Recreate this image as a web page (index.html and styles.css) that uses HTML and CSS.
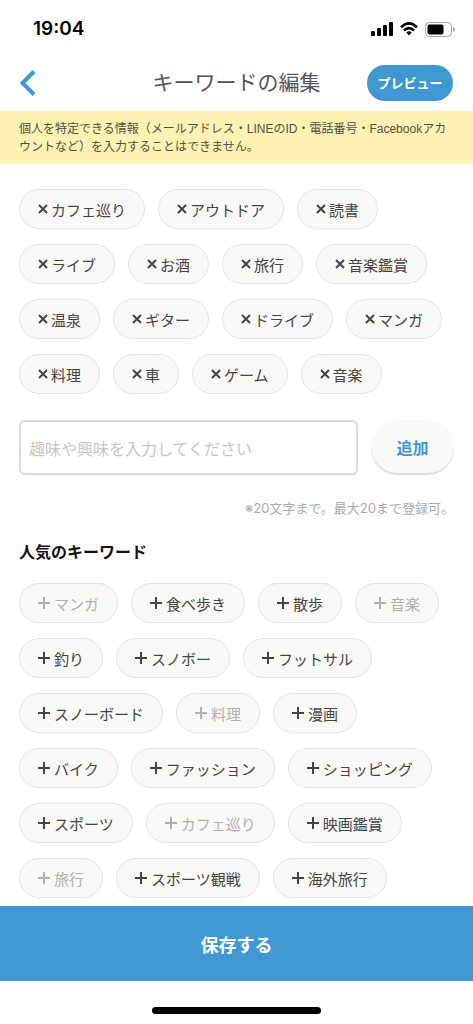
FILE: index.html
```html
<!DOCTYPE html>
<html lang="ja">
<head>
<meta charset="utf-8">
<meta name="viewport" content="width=device-width, initial-scale=1">
<title>キーワードの編集</title>
<link rel="stylesheet" href="styles.css">
</head>
<body>
<svg class="symbols" aria-hidden="true">
  <symbol id="remove" viewBox="0 0 10 10"><path d="M1 1L9 9M9 1L1 9"/></symbol>
  <symbol id="plus" viewBox="0 0 12 12"><path d="M0 6H12M6 0V12"/></symbol>
</svg>
<div class="screen">
  <div class="status">
    <span class="time">19:04</span>
    <div class="status-icons">
      <svg width="22" height="14" viewBox="0 0 22 14" aria-hidden="true"><rect x="0" y="9" width="4" height="5" rx="1"/><rect x="6" y="6" width="4" height="8" rx="1"/><rect x="12" y="3" width="4" height="11" rx="1"/><rect x="18" y="0" width="4" height="14" rx="1"/></svg>
      <svg width="18" height="14" viewBox="0 0 18 14" aria-hidden="true"><g fill="none" stroke="#000" stroke-width="2.6"><path d="M1 5.2Q9-2.4 17 5.2"/><path d="M4 8.5Q9 3.9 14 8.5"/></g><path d="M6.2 10.4Q9 8.2 11.8 10.4L9 13.4Z"/></svg>
      <svg width="30" height="15" viewBox="0 0 30 15" aria-hidden="true"><rect x=".5" y=".5" width="26" height="14" rx="4" fill="#fff" stroke="#a3a3a3"/><rect x="2.5" y="2.5" width="16" height="10" rx="2"/><path d="M28 5Q30 5.700 30 7.500T28 10Z" fill="#a3a3a3"/></svg>
    </div>
  </div>
  <header class="header">
    <button class="back" type="button" aria-label="戻る"><svg width="16" height="26" viewBox="0 0 16 26" aria-hidden="true"><path d="M14 1.500L2.500 13L14 24.500"/></svg></button>
    <h1 class="title">キーワードの編集</h1>
    <button class="preview" type="button">プレビュー</button>
  </header>
  <p class="notice">個人を特定できる情報（メールアドレス・LINEのID・電話番号・Facebookアカ<br>ウントなど）を入力することはできません。</p>
  <main class="content">
    <div class="chips">
      <button class="chip remove" type="button"><svg><use href="#remove"/></svg>カフェ巡り</button>
      <button class="chip remove" type="button"><svg><use href="#remove"/></svg>アウトドア</button>
      <button class="chip remove" type="button"><svg><use href="#remove"/></svg>読書</button>
      <button class="chip remove" type="button"><svg><use href="#remove"/></svg>ライブ</button>
      <button class="chip remove" type="button"><svg><use href="#remove"/></svg>お酒</button>
      <button class="chip remove" type="button"><svg><use href="#remove"/></svg>旅行</button>
      <button class="chip remove" type="button"><svg><use href="#remove"/></svg>音楽鑑賞</button>
      <button class="chip remove" type="button"><svg><use href="#remove"/></svg>温泉</button>
      <button class="chip remove" type="button"><svg><use href="#remove"/></svg>ギター</button>
      <button class="chip remove" type="button"><svg><use href="#remove"/></svg>ドライブ</button>
      <button class="chip remove" type="button"><svg><use href="#remove"/></svg>マンガ</button>
      <button class="chip remove" type="button"><svg><use href="#remove"/></svg>料理</button>
      <button class="chip remove" type="button"><svg><use href="#remove"/></svg>車</button>
      <button class="chip remove" type="button"><svg><use href="#remove"/></svg>ゲーム</button>
      <button class="chip remove" type="button"><svg><use href="#remove"/></svg>音楽</button>
    </div>
    <form class="entry">
      <input class="field" type="text" maxlength="20" aria-label="キーワード" placeholder="趣味や興味を入力してください">
      <button class="add" type="button">追加</button>
    </form>
    <p class="hint">※20文字まで。最大20まで登録可。</p>
    <h2 class="heading">人気のキーワード</h2>
    <div class="chips">
      <button class="chip plus" type="button" disabled><svg><use href="#plus"/></svg>マンガ</button>
      <button class="chip plus" type="button"><svg><use href="#plus"/></svg>食べ歩き</button>
      <button class="chip plus" type="button"><svg><use href="#plus"/></svg>散歩</button>
      <button class="chip plus" type="button" disabled><svg><use href="#plus"/></svg>音楽</button>
      <button class="chip plus" type="button"><svg><use href="#plus"/></svg>釣り</button>
      <button class="chip plus" type="button"><svg><use href="#plus"/></svg>スノボー</button>
      <button class="chip plus" type="button"><svg><use href="#plus"/></svg>フットサル</button>
      <button class="chip plus" type="button"><svg><use href="#plus"/></svg>スノーボード</button>
      <button class="chip plus" type="button" disabled><svg><use href="#plus"/></svg>料理</button>
      <button class="chip plus" type="button"><svg><use href="#plus"/></svg>漫画</button>
      <button class="chip plus" type="button"><svg><use href="#plus"/></svg>バイク</button>
      <button class="chip plus" type="button"><svg><use href="#plus"/></svg>ファッション</button>
      <button class="chip plus" type="button"><svg><use href="#plus"/></svg>ショッピング</button>
      <button class="chip plus" type="button"><svg><use href="#plus"/></svg>スポーツ</button>
      <button class="chip plus" type="button" disabled><svg><use href="#plus"/></svg>カフェ巡り</button>
      <button class="chip plus" type="button"><svg><use href="#plus"/></svg>映画鑑賞</button>
      <button class="chip plus" type="button" disabled><svg><use href="#plus"/></svg>旅行</button>
      <button class="chip plus" type="button"><svg><use href="#plus"/></svg>スポーツ観戦</button>
      <button class="chip plus" type="button"><svg><use href="#plus"/></svg>海外旅行</button>
    </div>
  </main>
  <footer class="footer">
    <button class="save" type="button">保存する</button>
    <div class="home"><span class="home-bar"></span></div>
  </footer>
</div>
</body>
</html>
```

FILE: styles.css
```css
* { box-sizing: border-box; }

body {
  margin: 0;
  background: #fff;
  color: #444;
  font-family: "Liberation Sans", "Noto Sans CJK JP", sans-serif;
}

button, input {
  margin: 0;
  padding: 0;
  border: 0;
  font-family: "Noto Sans CJK JP", sans-serif;
}

h1, h2, p { margin: 0; }

.symbols {
  position: absolute;
  width: 0;
  height: 0;
}

.screen {
  display: flex;
  flex-direction: column;
  height: 100vh;
}

.status {
  display: flex;
  flex: none;
  align-items: center;
  justify-content: space-between;
  height: 56px;
  padding: 2px 18px 0 33px;
}

.time {
  color: #000;
  font: 600 19px/24px Inter, sans-serif;
}

.status-icons {
  display: flex;
  align-items: center;
  gap: 7px;
}

.header {
  display: grid;
  flex: none;
  grid-template-columns: 86px 1fr 86px;
  align-items: center;
  height: 55px;
  padding: 0 20px 2px;
}

.back {
  display: flex;
  width: 16px;
  background: none;
}

.back path {
  fill: none;
  stroke: #3f98d1;
  stroke-width: 4;
}

.title {
  color: #555;
  font-size: 21px;
  font-weight: 400;
  line-height: 30px;
  text-align: center;
}

.preview {
  height: 36px;
  border-radius: 18px;
  background: #3f98d1;
  color: #fff;
  font-size: 13px;
  font-weight: 700;
}

.notice {
  flex: none;
  padding: 9px 8px 8px 19px;
  background: #fff2b3;
  color: #555040;
  font-size: 12px;
  line-height: 18px;
}

.content {
  flex: 1;
  min-height: 0;
  padding: 25px 19px 0;
  overflow: hidden;
}

.chips {
  display: flex;
  flex-wrap: wrap;
  gap: 15px 13px;
}

.chip {
  display: flex;
  align-items: center;
  height: 40px;
  padding: 0 18px;
  border: 1px solid #e4e4e4;
  border-radius: 20px;
  background: #f9f9f8;
  color: #444;
  font-size: 15px;
}

.chip svg {
  fill: none;
  stroke: currentColor;
  stroke-width: 2;
}

.remove { gap: 3px; }

.remove svg {
  width: 10px;
  height: 10px;
}

.plus { gap: 4px; }

.plus svg {
  width: 12px;
  height: 12px;
}

.chip:disabled { color: #b0b0b0; }

.entry {
  display: flex;
  gap: 13px;
  margin-top: 26px;
}

.field {
  flex: 1;
  min-width: 0;
  height: 55px;
  padding: 0 8px;
  border: 2px solid #dcdcdc;
  border-radius: 6px;
  background: #fff;
  font-size: 16px;
}

.field::placeholder { color: #c6c6c6; }

.add {
  width: 83px;
  height: 53px;
  border-radius: 27px;
  background: #f9f9f8;
  box-shadow: 0 2px 1px #dedede;
  color: #3f98d1;
  font-size: 16px;
  font-weight: 700;
}

.hint {
  margin-top: 22px;
  color: #aaa;
  font-family: Inter, "Noto Sans CJK JP", sans-serif;
  font-size: 13px;
  line-height: 22px;
  text-align: right;
}

.heading {
  margin: 22px 0 18px;
  color: #111;
  font-size: 16px;
  font-weight: 700;
  line-height: 24px;
}

.footer { flex: none; }

.save {
  display: block;
  width: 100%;
  height: 75px;
  background: #3f98d1;
  color: #fff;
  font-size: 18px;
  font-weight: 700;
}

.home {
  display: flex;
  align-items: flex-end;
  justify-content: center;
  height: 43px;
  padding-bottom: 10px;
}

.home-bar {
  width: 169px;
  height: 7px;
  border-radius: 4px;
  background: #000;
}
```
